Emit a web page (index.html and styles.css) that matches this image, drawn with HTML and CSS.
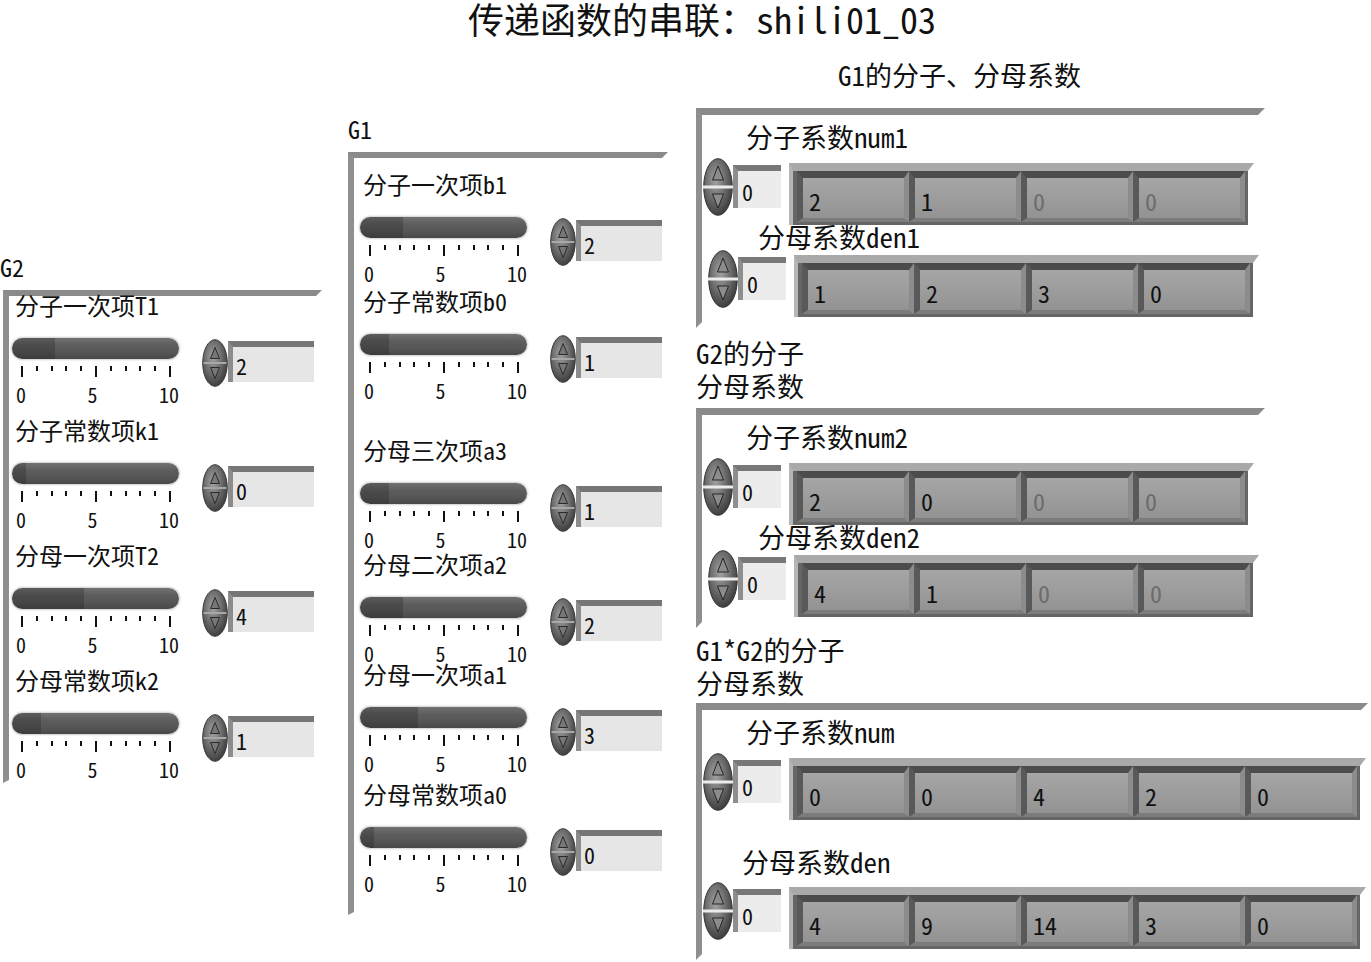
FILE: index.html
```html
<!DOCTYPE html>
<html lang="zh">
<head>
<meta charset="utf-8">
<title>传递函数的串联</title>
<link rel="stylesheet" href="styles.css">
</head>
<body>
<svg class="defs" width="0" height="0" aria-hidden="true">
  <defs>
    <radialGradient id="gs" cx="0.42" cy="0.38" r="0.7">
      <stop offset="0" stop-color="#a4a4a4"/>
      <stop offset="0.55" stop-color="#666"/>
      <stop offset="1" stop-color="#333"/>
    </radialGradient>
  </defs>
  <symbol id="tk" viewBox="0 0 167 11">
    <path d="M10 0v11M25 0v5M40 0v5M54 0v5M69 0v5M84 0v11M99 0v5M114 0v5M128 0v5M143 0v5M158 0v11" stroke="#111" stroke-width="2" fill="none"/>
  </symbol>
  <symbol id="sp" viewBox="0 0 26 48">
    <ellipse cx="13" cy="24" rx="12.3" ry="23.3" fill="url(#gs)" stroke="#3a3a3a" stroke-width="1"/>
    <line x1="1.5" y1="24" x2="24.5" y2="24" stroke="#a8a8a8" stroke-width="2"/>
    <path d="M13 8.5 L8.5 19.5 H17.5 Z" fill="#777" stroke="#2a2a2a" stroke-width="1"/>
    <path d="M13 39.5 L8.5 28.5 H17.5 Z" fill="#777" stroke="#2a2a2a" stroke-width="1"/>
  </symbol>
  <symbol id="sl" viewBox="0 0 30 58">
    <ellipse cx="15" cy="29" rx="14.3" ry="28.3" fill="url(#gs)" stroke="#333" stroke-width="1"/>
    <rect x="0" y="27.5" width="30" height="3" fill="#ececec"/>
    <path d="M15 8 L9.5 22 H20.5 Z" fill="#8c8c8c" stroke="#262626" stroke-width="1"/>
    <path d="M15 50 L9.5 36 H20.5 Z" fill="#8c8c8c" stroke="#262626" stroke-width="1"/>
  </symbol>
</svg>

<div class="title">传递函数的串联：shili01_03</div>

<div class="board">
  <!-- G2 -->
  <div class="col-g2">
    <div class="cap">G2</div>
    <div class="frame frame-g2">
      <div class="ctl">
        <div class="cap">分子一次项T1</div>
        <div class="ctl-body">
          <div class="slide">
            <div class="track"><div class="fill" style="width:43px"></div></div>
            <svg class="ticks"><use href="#tk"/></svg>
            <div class="scale"><span>0</span><span>5</span><span>10</span></div>
          </div>
          <div class="num"><svg class="spin"><use href="#sp"/></svg><div class="numbox">2</div></div>
        </div>
      </div>
      <div class="ctl gap-16">
        <div class="cap">分子常数项k1</div>
        <div class="ctl-body">
          <div class="slide">
            <div class="track"><div class="fill" style="width:14px"></div></div>
            <svg class="ticks"><use href="#tk"/></svg>
            <div class="scale"><span>0</span><span>5</span><span>10</span></div>
          </div>
          <div class="num"><svg class="spin"><use href="#sp"/></svg><div class="numbox">0</div></div>
        </div>
      </div>
      <div class="ctl gap-16">
        <div class="cap">分母一次项T2</div>
        <div class="ctl-body">
          <div class="slide">
            <div class="track"><div class="fill" style="width:72px"></div></div>
            <svg class="ticks"><use href="#tk"/></svg>
            <div class="scale"><span>0</span><span>5</span><span>10</span></div>
          </div>
          <div class="num"><svg class="spin"><use href="#sp"/></svg><div class="numbox">4</div></div>
        </div>
      </div>
      <div class="ctl gap-16">
        <div class="cap">分母常数项k2</div>
        <div class="ctl-body">
          <div class="slide">
            <div class="track"><div class="fill" style="width:29px"></div></div>
            <svg class="ticks"><use href="#tk"/></svg>
            <div class="scale"><span>0</span><span>5</span><span>10</span></div>
          </div>
          <div class="num"><svg class="spin"><use href="#sp"/></svg><div class="numbox">1</div></div>
        </div>
      </div>
    </div>
  </div>

  <!-- G1 -->
  <div class="col-g1">
    <div class="cap">G1</div>
    <div class="frame frame-g1">
      <div class="ctl">
        <div class="cap">分子一次项b1</div>
        <div class="ctl-body">
          <div class="slide">
            <div class="track"><div class="fill" style="width:43px"></div></div>
            <svg class="ticks"><use href="#tk"/></svg>
            <div class="scale"><span>0</span><span>5</span><span>10</span></div>
          </div>
          <div class="num"><svg class="spin"><use href="#sp"/></svg><div class="numbox">2</div></div>
        </div>
      </div>
      <div class="ctl gap-8">
        <div class="cap">分子常数项b0</div>
        <div class="ctl-body">
          <div class="slide">
            <div class="track"><div class="fill" style="width:29px"></div></div>
            <svg class="ticks"><use href="#tk"/></svg>
            <div class="scale"><span>0</span><span>5</span><span>10</span></div>
          </div>
          <div class="num"><svg class="spin"><use href="#sp"/></svg><div class="numbox">1</div></div>
        </div>
      </div>
      <div class="ctl gap-40">
        <div class="cap">分母三次项a3</div>
        <div class="ctl-body">
          <div class="slide">
            <div class="track"><div class="fill" style="width:29px"></div></div>
            <svg class="ticks"><use href="#tk"/></svg>
            <div class="scale"><span>0</span><span>5</span><span>10</span></div>
          </div>
          <div class="num"><svg class="spin"><use href="#sp"/></svg><div class="numbox">1</div></div>
        </div>
      </div>
      <div class="ctl gap-5">
        <div class="cap">分母二次项a2</div>
        <div class="ctl-body">
          <div class="slide">
            <div class="track"><div class="fill" style="width:43px"></div></div>
            <svg class="ticks"><use href="#tk"/></svg>
            <div class="scale"><span>0</span><span>5</span><span>10</span></div>
          </div>
          <div class="num"><svg class="spin"><use href="#sp"/></svg><div class="numbox">2</div></div>
        </div>
      </div>
      <div class="ctl gap-1">
        <div class="cap">分母一次项a1</div>
        <div class="ctl-body">
          <div class="slide">
            <div class="track"><div class="fill" style="width:58px"></div></div>
            <svg class="ticks"><use href="#tk"/></svg>
            <div class="scale"><span>0</span><span>5</span><span>10</span></div>
          </div>
          <div class="num"><svg class="spin"><use href="#sp"/></svg><div class="numbox">3</div></div>
        </div>
      </div>
      <div class="ctl gap-11">
        <div class="cap">分母常数项a0</div>
        <div class="ctl-body">
          <div class="slide">
            <div class="track"><div class="fill" style="width:14px"></div></div>
            <svg class="ticks"><use href="#tk"/></svg>
            <div class="scale"><span>0</span><span>5</span><span>10</span></div>
          </div>
          <div class="num"><svg class="spin"><use href="#sp"/></svg><div class="numbox">0</div></div>
        </div>
      </div>
    </div>
  </div>

  <!-- Right column -->
  <div class="col-r">
    <div class="hdr">G1的分子、分母系数</div>
    <div class="aframe">
      <div class="alabel lab-num">分子系数num1</div>
      <div class="arow">
        <svg class="idx"><use href="#sl"/></svg>
        <div class="ibox">0</div>
        <div class="arr">
          <div class="cell">2</div><div class="cell">1</div><div class="cell dim">0</div><div class="cell dim">0</div>
        </div>
      </div>
      <div class="alabel lab-den">分母系数den1</div>
      <div class="arow arow-shift">
        <svg class="idx"><use href="#sl"/></svg>
        <div class="ibox">0</div>
        <div class="arr">
          <div class="cell">1</div><div class="cell">2</div><div class="cell">3</div><div class="cell">0</div>
        </div>
      </div>
    </div>

    <div class="hdr2">G2的分子<br>分母系数</div>
    <div class="aframe">
      <div class="alabel lab-num">分子系数num2</div>
      <div class="arow">
        <svg class="idx"><use href="#sl"/></svg>
        <div class="ibox">0</div>
        <div class="arr">
          <div class="cell">2</div><div class="cell">0</div><div class="cell dim">0</div><div class="cell dim">0</div>
        </div>
      </div>
      <div class="alabel lab-den">分母系数den2</div>
      <div class="arow arow-shift">
        <svg class="idx"><use href="#sl"/></svg>
        <div class="ibox">0</div>
        <div class="arr">
          <div class="cell">4</div><div class="cell">1</div><div class="cell dim">0</div><div class="cell dim">0</div>
        </div>
      </div>
    </div>

    <div class="hdr2 hdr3">G1*G2的分子<br>分母系数</div>
    <div class="aframe aframe-wide">
      <div class="alabel lab-num">分子系数num</div>
      <div class="arow">
        <svg class="idx"><use href="#sl"/></svg>
        <div class="ibox">0</div>
        <div class="arr">
          <div class="cell">0</div><div class="cell">0</div><div class="cell">4</div><div class="cell">2</div><div class="cell">0</div>
        </div>
      </div>
      <div class="alabel lab-den3">分母系数den</div>
      <div class="arow arow-den3">
        <svg class="idx"><use href="#sl"/></svg>
        <div class="ibox">0</div>
        <div class="arr">
          <div class="cell">4</div><div class="cell">9</div><div class="cell">14</div><div class="cell">3</div><div class="cell">0</div>
        </div>
      </div>
    </div>
  </div>
</div>
</body>
</html>
```
FILE: styles.css
```css
* { box-sizing: border-box; }
html, body { margin: 0; padding: 0; }
body {
  width: 1371px;
  height: 962px;
  overflow: hidden;
  background: #fff;
  color: #111;
  font-family: "Noto Sans Mono CJK SC", "Noto Sans CJK SC", "Liberation Mono", monospace;
}
.defs { display: block; width: 0; height: 0; overflow: hidden; }

.title {
  margin: 0 0 0 468px;
  height: 41px;
  font-size: 36px;
  line-height: 36px;
  white-space: nowrap;
}

.board { display: flex; align-items: flex-start; }
.col-g2 { flex: none; width: 348px; margin-top: 217px; }
.col-g1 { flex: none; width: 348px; margin-top: 79px; }
.col-r  { flex: none; width: 675px; margin-top: 21px; }

.cap {
  font-size: 24px;
  line-height: 18px;
  height: 26px;
  white-space: nowrap;
}

/* cluster frame: raised top + left edge, slanted ends */
.frame {
  margin-top: 6px;
  border-style: solid;
  border-width: 6px 6px 3px 6px;
  border-color: #8a8a8a transparent transparent #8f8f8f;
}
.frame-g2 { margin-left: 3px; width: 319px; }
.frame-g1 { width: 320px; padding: 17px 0 18px 3px; }

.ctl { height: 109px; padding-left: 3px; }
.ctl .cap { margin-left: 3px; }
.gap-16 { margin-top: 16px; }
.gap-8 { margin-top: 8px; }
.gap-40 { margin-top: 40px; }
.gap-5 { margin-top: 5px; }
.gap-1 { margin-top: 1px; }
.gap-11 { margin-top: 11px; }

.ctl-body { display: flex; align-items: flex-start; margin-top: 16px; }
.slide { flex: none; width: 167px; }
.track {
  height: 21px;
  border-radius: 10.5px;
  background: linear-gradient(#727272, #5d5d5d 35%, #555 70%, #484848);
  box-shadow: 0 0 2px 1px #cfcfcf;
  overflow: hidden;
}
.fill { height: 100%; background: rgba(20, 20, 20, 0.24); }
.ticks { display: block; width: 167px; height: 11px; margin-top: 7px; }
.scale {
  display: flex;
  justify-content: space-between;
  margin-top: 10px;
  padding-left: 4px;
  height: 16px;
  font-size: 20px;
  line-height: 16px;
}

.num { display: flex; align-items: flex-start; margin: 1px 0 0 23px; }
.spin { display: block; flex: none; width: 26px; height: 48px; }
.numbox {
  margin-top: 2px;
  width: 86px;
  height: 41px;
  background: #e6e6e6;
  border-top: 6px solid #767676;
  border-left: 5px solid #8c8c8c;
  padding: 3px 0 0 3px;
  font-size: 22px;
  line-height: 31px;
}

/* right column */
.hdr {
  margin-left: 142px;
  font-size: 27px;
  line-height: 26px;
  height: 30px;
  white-space: nowrap;
}
.hdr2 {
  margin: 8px 0 6px 0;
  font-size: 27px;
  line-height: 33px;
  white-space: nowrap;
}
.hdr3 { margin: 5px 0 4px 0; }
.hdr + .aframe { margin-top: 16px; }

.aframe {
  width: 569px;
  border-style: solid;
  border-width: 7px 7px 6px 6px;
  border-color: #8a8a8a transparent transparent #8f8f8f;
  padding-bottom: 5px;
}
.aframe-wide { width: 672px; }

.alabel {
  height: 28px;
  font-size: 27px;
  line-height: 24px;
  white-space: nowrap;
}
.lab-num { margin: 10px 0 0 44px; }
.lab-den { margin-left: 56px; }
.lab-den3 { margin: 30px 0 0 40px; }

.arow { display: flex; align-items: flex-start; margin: 5px 0 0 1px; }
.arow-shift { margin: -3px 0 0 6px; }
.arow-den3 { margin: 4px 0 0 1px; }

.idx { display: block; flex: none; width: 30px; height: 58px; }
.ibox {
  flex: none;
  margin-top: 7px;
  width: 48px;
  height: 43px;
  background: #ececec;
  border-top: 6px solid #787878;
  border-left: 5px solid #8e8e8e;
  padding: 3px 0 0 4px;
  font-size: 22px;
  line-height: 34px;
}

.arr {
  display: flex;
  margin: 5px 0 0 8px;
  border-style: solid;
  border-width: 8px 6px 0 4px;
  border-color: #a9a9a9 transparent transparent #b6b6b6;
  background: #666;
  background-clip: padding-box;
  padding: 0 3px 3px 4px;
}
.cell {
  flex: none;
  width: 112px;
  height: 51px;
  border-style: solid;
  border-width: 7px 5px 4px 6px;
  border-color: #4c4c4c #8c8c8c #7c7c7c #595959;
  background: linear-gradient(#a6a6a6, #939393);
  padding: 9px 0 0 6px;
  font-size: 24px;
  line-height: 28px;
  color: #111;
}
.cell.dim { color: #6c6c6c; }
```
